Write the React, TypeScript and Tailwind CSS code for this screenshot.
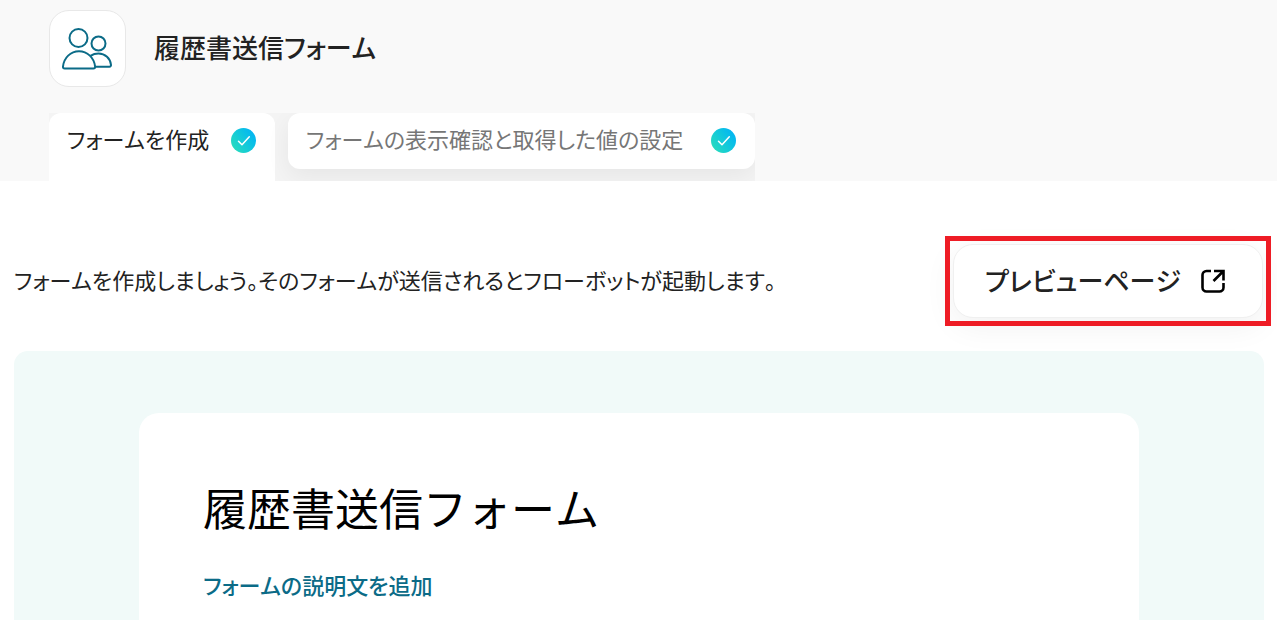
type TabProps = { label: string; active?: boolean };

function CheckBadge() {
  return (
    <span className="flex size-[25px] shrink-0 items-center justify-center rounded-full bg-linear-55 from-[#2ee0b4] to-[#08aefb]">
      <svg viewBox="0 0 25 25" className="size-full" fill="none" stroke="#fff" strokeWidth="1.5" strokeLinecap="round" strokeLinejoin="round" aria-hidden="true">
        <path d="M7.5 13.2 11 16.8 18.3 8.8" />
      </svg>
    </span>
  );
}

function PeopleIcon() {
  return (
    <svg viewBox="0 0 50 42" className="h-[42px] w-[50px]" fill="none" stroke="#0b6b87" strokeWidth="2" strokeLinejoin="round" aria-hidden="true">
      <circle cx="16.5" cy="10" r="9" />
      <circle cx="36.5" cy="15.5" r="7" />
      <path d="M2.6 40.5H31.5C32.6 40.5 33.2 39.8 33.1 38.7 32.3 29.8 25.3 23.2 17 23.2S1.7 29.8 1 38.7C0.9 39.8 1.5 40.5 2.6 40.5Z" />
      <path d="M28.5 27.8C31 26.2 33.6 25.5 36.5 25.5 43.2 25.5 48.3 30.5 49 36.8 49.1 38 48.5 38.7 47.400 38.700H33" />
    </svg>
  );
}

function OpenIcon() {
  return (
    <svg viewBox="0 0 24 24" className="size-6" fill="none" stroke="#000" strokeWidth="2.6" aria-hidden="true">
      <path d="M10 2H5.5A4 4 0 0 0 1.500 6V18.500A4 4 0 0 0 5.500 22.500H18.500A4 4 0 0 0 22.500 18.500V14" />
      <path d="M13 2H22.500V11.500M22 2.500 12.500 12" />
    </svg>
  );
}

function Tab({ label, active = false }: TabProps) {
  return (
    <button
      type="button"
      role="tab"
      aria-selected={active}
      className={
        active
          ? "flex min-w-[226px] items-start justify-between gap-4 rounded-t-xl bg-white pt-[9px] pr-[19px] pl-[18px] text-[22px] leading-8 text-[#222]"
          : "flex h-14 min-w-[467px] items-start justify-between gap-4 rounded-xl bg-white pt-[9px] pr-[19px] pl-[18px] text-[22px] leading-8 text-[#767676] shadow-[0_8px_24px_rgba(0,0,0,0.06)]"
      }
    >
      <span className="whitespace-nowrap">{label}</span>
      <span className="pt-[6px]">
        <CheckBadge />
      </span>
    </button>
  );
}

export default function App() {
  return (
    <div className="flex min-h-screen flex-col bg-white font-['Noto_Sans_CJK_JP',sans-serif] text-[#222] [font-feature-settings:'palt'] [font-kerning:none]" lang="ja">
      <header className="bg-[#f9f9f9] px-[49px] pt-[10px]">
        <div className="flex items-center gap-7">
          <div className="flex size-[77px] items-center justify-center rounded-[20px] border border-[#e8e8e8] bg-white pr-[2px]">
            <PeopleIcon />
          </div>
          <h1 className="pb-[3px] text-[26px] leading-9 font-medium">履歴書送信フォーム</h1>
        </div>
        <div role="tablist" className="mt-[26px] flex h-[68px] w-fit gap-[13px] overflow-hidden bg-[#f4f4f4]">
          <Tab label="フォームを作成" active />
          <Tab label="フォームの表示確認と取得した値の設定" />
        </div>
      </header>

      <main className="flex grow flex-col px-[13px] pt-[63px]">
        <div className="flex items-center justify-between px-px">
          <p className="pb-[4px] text-[22px] leading-8">フォームを作成しましょう。そのフォームが送信されるとフローボットが起動します。</p>
          <button
            type="button"
            className="relative flex h-[74px] min-w-[310px] items-center justify-between gap-4 rounded-[20px] border border-[#f0f0f0] bg-white pr-[37px] pl-[31px] text-[26px] leading-9 font-medium shadow-[0_8px_32px_rgba(0,0,0,0.06)]"
          >
            <span className="pb-[2px] whitespace-nowrap">プレビューページ</span>
            <OpenIcon />
            <span className="pointer-events-none absolute -inset-[9px] border-5 border-[#ee1c25]" />
          </button>
        </div>

        <section className="relative mt-[33px] ml-px flex grow flex-col rounded-t-[14px] bg-[#f1faf9] px-[10%] pt-[62px]">
          <div className="grow rounded-t-[20px] bg-white px-16 pt-[62px]">
            <h2 className="text-[44px] leading-[64px] text-black [font-feature-settings:normal]">履歴書送信フォーム</h2>
            <button type="button" className="mt-[29px] text-[22px] leading-8 font-medium text-[#0b6b87]">
              フォームの説明文を追加
            </button>
          </div>
        </section>
      </main>
    </div>
  );
}
